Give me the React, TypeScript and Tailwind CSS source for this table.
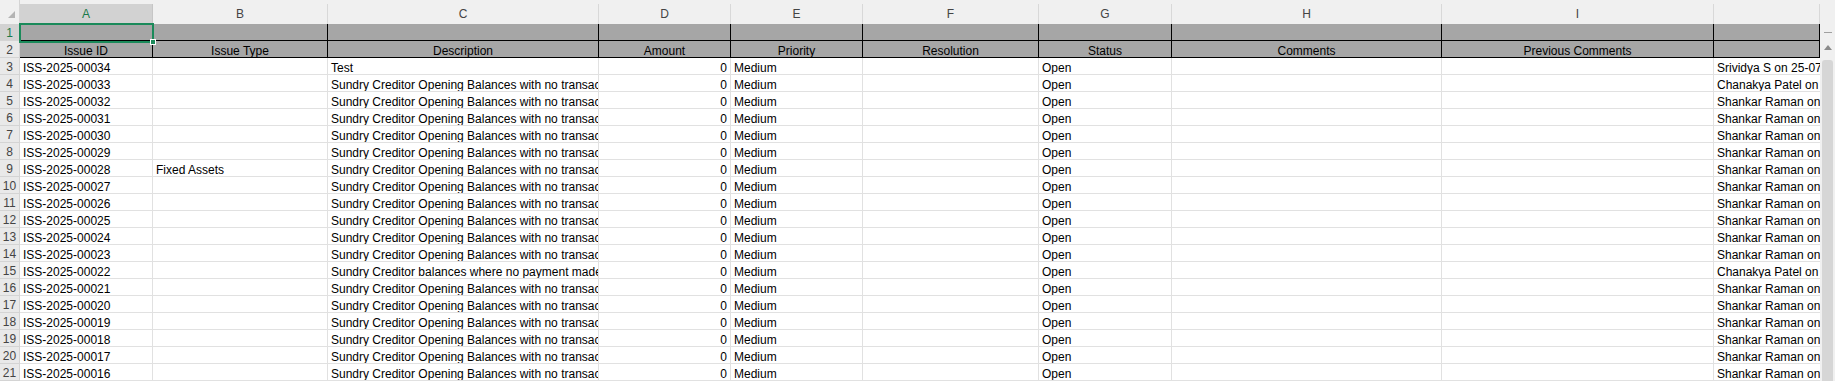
import React from "react";

const grid =
  "grid grid-cols-[20px_133px_175px_271px_132px_132px_176px_133px_270px_272px_106px]";

const letters = ["A", "B", "C", "D", "E", "F", "G", "H", "I", ""];

const headers = [
  "Issue ID",
  "Issue Type",
  "Description",
  "Amount",
  "Priority",
  "Resolution",
  "Status",
  "Comments",
  "Previous Comments",
  "",
];

const sundry = "Sundry Creditor Opening Balances with no transactions during the year";

// rows 3..21, newest issue first
const rows = Array.from({ length: 19 }, (_, i) => {
  const num = 34 - i;
  let desc = sundry;
  let by = "Shankar Raman on 24-07-2025";
  if (num === 34) {
    desc = "Test";
    by = "Srividya S on 25-07-2025";
  }
  if (num === 33) by = "Chanakya Patel on 24-07-2025";
  if (num === 22) {
    desc = "Sundry Creditor balances where no payment made during the year";
    by = "Chanakya Patel on 23-07-2025";
  }
  return {
    id: `ISS-2025-${String(num).padStart(5, "0")}`,
    type: num === 28 ? "Fixed Assets" : "",
    desc,
    by,
  };
});

function Cell({ children, className = "" }: { children?: React.ReactNode; className?: string }) {
  return (
    <div
      className={`h-[17px] overflow-hidden whitespace-nowrap border-r border-b border-[#e1e1e1] bg-white px-[3px] pt-[2px] text-[12px] leading-[16px] text-black ${className}`}
    >
      {children}
    </div>
  );
}

function RowHead({ n, active = false }: { n: number; active?: boolean }) {
  return (
    <div
      className={`h-[17px] overflow-hidden border-r border-b border-[#d4d4d4] pt-[1px] text-center text-[12px] leading-[16px] ${
        active ? "bg-[#d2d2d2] text-[#1a7a4a]" : "bg-[#e9e9e9] text-[#444]"
      }`}
    >
      {n}
    </div>
  );
}

export default function App() {
  return (
    <div
      className="relative flex h-[381px] w-[1835px] overflow-hidden bg-white"
      style={{ fontFamily: '"Liberation Sans", Arial, sans-serif' }}
    >
      <div className="w-[1820px] overflow-hidden">
        {/* column letters */}
        <div className={`${grid} h-6 bg-[#f0f0f0] pt-1`}>
          <div className="relative -mt-1 h-6 border-r border-[#d4d4d4] bg-[#f0f0f0]">
            <div className="absolute bottom-[6px] right-[4px] h-0 w-0 border-b-[7px] border-l-[7px] border-b-[#b4b4b4] border-l-transparent" />
          </div>
          {letters.map((l, i) => (
            <div
              key={i}
              className={`h-5 border-r text-center text-[12px] leading-5 ${
                i === 0
                  ? "border-[#c6c6c6] bg-[#d2d2d2] text-[#1a7a4a]"
                  : "border-[#d8d8d8] bg-[#f0f0f0] text-[#444]"
              }`}
            >
              {l}
            </div>
          ))}
        </div>

        {/* row 1: empty banded row */}
        <div className={grid}>
          <RowHead n={1} active />
          {letters.map((_, i) => (
            <div key={i} className="h-[17px] border-r border-b border-black bg-[#a6a6a6]" />
          ))}
        </div>

        {/* row 2: field names */}
        <div className={grid}>
          <RowHead n={2} />
          {headers.map((h, i) => (
            <div
              key={i}
              className="h-[17px] overflow-hidden whitespace-nowrap border-r border-b border-black bg-[#a6a6a6] pt-[2px] text-center text-[12px] leading-[16px] text-black"
            >
              {h}
            </div>
          ))}
        </div>

        {rows.map((r, i) => (
          <div key={r.id} className={grid}>
            <RowHead n={i + 3} />
            <Cell>{r.id}</Cell>
            <Cell>{r.type}</Cell>
            <Cell>{r.desc}</Cell>
            <Cell className="text-right">0</Cell>
            <Cell>Medium</Cell>
            <Cell />
            <Cell>Open</Cell>
            <Cell />
            <Cell />
            <Cell className="border-r-0">{r.by}</Cell>
          </div>
        ))}
      </div>

      {/* vertical scrollbar */}
      <div className="flex w-[15px] flex-col items-center bg-[#f0f0f0] pt-6">
        <div className="mt-2 h-px w-[8px] bg-[#a0a0a0]" />
        <div className="mt-[12px] h-0 w-0 border-b-[5px] border-l-[4px] border-r-[4px] border-b-[#8a8a8a] border-l-transparent border-r-transparent" />
        <div className="mt-[10px] w-[11px] flex-1 rounded-t-[3px] bg-[#d6d6d6]" />
      </div>

      {/* active cell A1 */}
      <div className="pointer-events-none absolute left-[19px] top-[23px] h-[20px] w-[135px] border-2 border-[#1a8a5a]" />
      <div className="pointer-events-none absolute left-[150px] top-[39px] h-[6px] w-[6px] border border-white bg-[#1a8a5a]" />
    </div>
  );
}
